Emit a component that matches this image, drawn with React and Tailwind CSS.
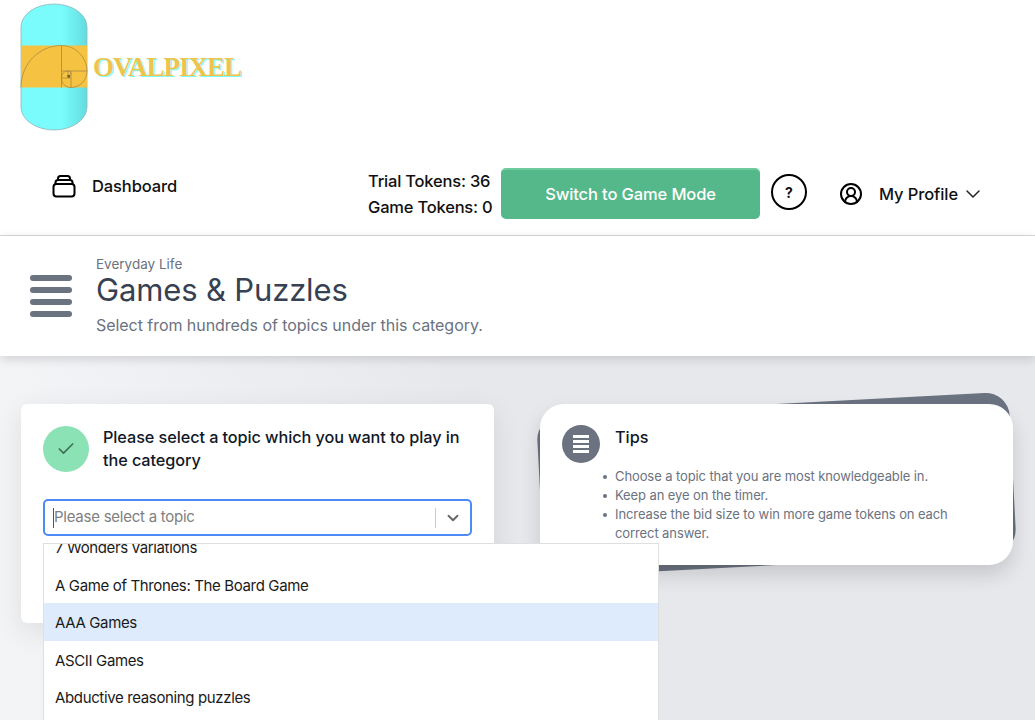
import { ChevronDown, Check, CircleUserRound } from 'lucide-react';

const topics = ['7 Wonders variations', 'A Game of Thrones: The Board Game', 'AAA Games', 'ASCII Games', 'Abductive reasoning puzzles', 'Abstract strategy games'];

function Logo() {
  return (
    <svg width="68" height="128" viewBox="0 0 68 128" className="shrink-0">
      <defs>
        <linearGradient id="cyl" x1="0" x2="1" y1="0" y2="0">
          <stop offset="0.62" stopColor="#7afcfd" />
          <stop offset="1" stopColor="#62dcde" />
        </linearGradient>
      </defs>
      <path d="M1 24A33 23 0 0 1 67 24V104A33 23 0 0 1 1 104Z" fill="url(#cyl)" stroke="#8fb4b8" strokeWidth="0.8" />
      <rect x="1" y="42.500" width="66" height="42" fill="#f5c242" />
      <g fill="none" stroke="#a98a3c" strokeWidth="0.8">
        <path d="M1 84.500C1 60 20 42.500 41.500 42.500C56 42.500 67 55 67 68C67 77 60 84.500 51 84.500C45 84.500 41.500 80 41.500 75C41.500 71 44 68 48 68C50.500 68 51 70 51 72" />
        <path d="M41.500 42.500V84.500M41.500 75H51M41.500 68H67M51 68V84.500M48 68V75" />
      </g>
      <rect x="47.500" y="72" width="2.500" height="2.500" fill="#6b5a2a" />
    </svg>
  );
}

export default function App() {
  return (
    <div className="h-[720px] overflow-hidden font-['Inter',sans-serif]">
      <header className="h-[236px] border-b border-[#d8d9db] bg-white">
        <div className="flex h-[150px] items-start pl-[20px] pt-[3px]">
          <Logo />
          <span className="ml-[5px] mt-[48px] font-['Liberation_Serif',serif] text-[27px] font-bold leading-[32px] tracking-[-1px] text-[#eec44d] [text-shadow:1px_1px_0_#7afcfd]">OVALPIXEL</span>
        </div>
        <div className="flex items-start">
          <div className="ml-[52px] mt-[24px] flex w-[316px] items-center">
            <svg width="24" height="24" viewBox="0 0 24 24" fill="none" stroke="#000" strokeWidth="2" strokeLinejoin="round" className="shrink-0">
              <rect x="1.500" y="10" width="21" height="12.500" rx="3" />
              <path d="M3.500 10V8.500C3.500 7 4.500 6 6 6h12c1.500 0 2.500 1 2.500 2.500V10M6 6V4.500C6 3 7 2 8.500 2h7C17 2 18 3 18 4.500V6" />
            </svg>
            <span className="ml-[16px] text-[16.500px] font-medium leading-[24px] tracking-[-0.1px] text-[#111]">Dashboard</span>
          </div>
          <div className="mt-[18px] w-[133px] text-[16.500px] font-medium leading-[26px] tracking-[-0.2px] text-[#111]">
            <p>Trial Tokens: 36</p>
            <p>Game Tokens: 0</p>
          </div>
          <button className="mt-[18px] h-[51px] w-[259px] rounded-[5px] border-t-2 border-[#6dcb9c] bg-[#55b88a] text-[16.500px] font-medium tracking-[-0.12px] text-white">Switch to Game Mode</button>
          <div className="ml-[11px] mt-[24px] flex size-[36px] items-center justify-center rounded-full border-2 border-black text-[14px] font-bold text-[#111]">?</div>
          <div className="ml-[32px] mt-[32px] flex items-center">
            <CircleUserRound size={24} color="#000" strokeWidth={2} />
            <span className="ml-[16px] text-[16.500px] font-medium leading-[24px] tracking-[-0.1px] text-[#111]">My Profile</span>
            <ChevronDown size={24} color="#222" strokeWidth={1.500} className="ml-[3px]" />
          </div>
        </div>
      </header>

      <section className="relative z-10 flex h-[120px] items-center bg-white shadow-[0_3px_10px_rgba(0,0,0,0.14)]">
        <div className="ml-[30px] flex w-[42px] flex-col gap-[6px]">
          <span className="h-[6px] rounded-full bg-[#6b7280]" />
          <span className="h-[6px] rounded-full bg-[#6b7280]" />
          <span className="h-[6px] rounded-full bg-[#6b7280]" />
          <span className="h-[6px] rounded-full bg-[#6b7280]" />
        </div>
        <div className="ml-[24px] pb-[2px]">
          <p className="text-[13.500px] leading-[18px] text-[#6b7280]">Everyday Life</p>
          <h1 className="text-[31px] leading-[34px] tracking-[-0.15px] text-[#374151]">Games &amp; Puzzles</h1>
          <p className="mt-[7px] text-[16px] leading-[22px] tracking-[-0.05px] text-[#6b7280]">Select from hundreds of topics under this category.</p>
        </div>
      </section>

      <main className="grid h-[364px] grid-cols-2 gap-[46px] bg-linear-to-r from-gray-100 to-[#e7e8ec] to-45% pl-[21px] pr-[22px] pt-[48px]">
        <div className="relative h-[219px] rounded-[6px] bg-white p-[22px] shadow-[0_8px_28px_rgba(0,0,0,0.09)]">
          <div className="flex">
            <div className="flex size-[46px] shrink-0 items-center justify-center rounded-full bg-[#8ae2b5]">
              <Check size={20} color="#3f6f58" strokeWidth={2} />
            </div>
            <h2 className="ml-[14px] text-[16.250px] font-medium leading-[22.500px] tracking-[-0.08px] text-[#111827]">Please select a topic which you want to play in the category</h2>
          </div>
          <div className="mt-[27px] flex h-[37px] items-center rounded-[5px] border-2 border-[#4c8bf5] bg-white pl-[8px]">
            <span className="h-[20px] w-px bg-[#555]" />
            <span className="flex-1 text-[15px] tracking-[-0.25px] text-[#808080]">Please select a topic</span>
            <span className="h-[20px] w-px bg-[#ccc]" />
            <ChevronDown size={18} color="#666" strokeWidth={2.500} className="mx-[8px]" />
          </div>
          <div className="absolute left-[22px] top-[139px] z-10 h-[200px] w-[616px] overflow-hidden border border-[#dfdfdf] bg-white">
            <div className="-mt-[16px]">
              {topics.map((t) => (
                <div key={t} className={`flex h-[37.500px] items-center pl-[11px] pt-[3px] text-[15px] tracking-[-0.36px] text-[#1a1a1a] ${t === 'AAA Games' ? 'bg-[#deebfc]' : ''}`}>{t}</div>
              ))}
            </div>
          </div>
        </div>

        <div className="relative h-[161px]">
          <div className="absolute inset-0 -rotate-3 rounded-[24px] bg-[#6b7280]" />
          <div className="relative flex h-full rounded-[24px] bg-white pl-[22px] pt-[21px] shadow-[0_10px_20px_rgba(0,0,0,0.14)]">
            <div className="flex size-[38px] shrink-0 items-center justify-center rounded-full bg-[#6b7280]">
              <div className="flex w-[16px] flex-col gap-[2.500px]">
                <span className="h-[2.500px] bg-white" />
                <span className="h-[2.500px] bg-white" />
                <span className="h-[2.500px] bg-white" />
                <span className="h-[2.500px] bg-white" />
              </div>
            </div>
            <div className="ml-[15px] w-[350px]">
              <h3 className="mt-[1px] text-[16.250px] font-medium leading-[22px] text-[#111827]">Tips</h3>
              <ul className="mt-[19px] text-[13px] leading-[19px] tracking-[-0.1px] text-[#6b7280]">
                <li className="relative">Choose a topic that you are most knowledgeable in.<span className="absolute -left-[12px] top-[8px] size-[4px] rounded-full bg-[#6b7280]" /></li>
                <li className="relative">Keep an eye on the timer.<span className="absolute -left-[12px] top-[8px] size-[4px] rounded-full bg-[#6b7280]" /></li>
                <li className="relative">Increase the bid size to win more game tokens on each correct answer.<span className="absolute -left-[12px] top-[8px] size-[4px] rounded-full bg-[#6b7280]" /></li>
              </ul>
            </div>
          </div>
        </div>
      </main>
    </div>
  );
}
